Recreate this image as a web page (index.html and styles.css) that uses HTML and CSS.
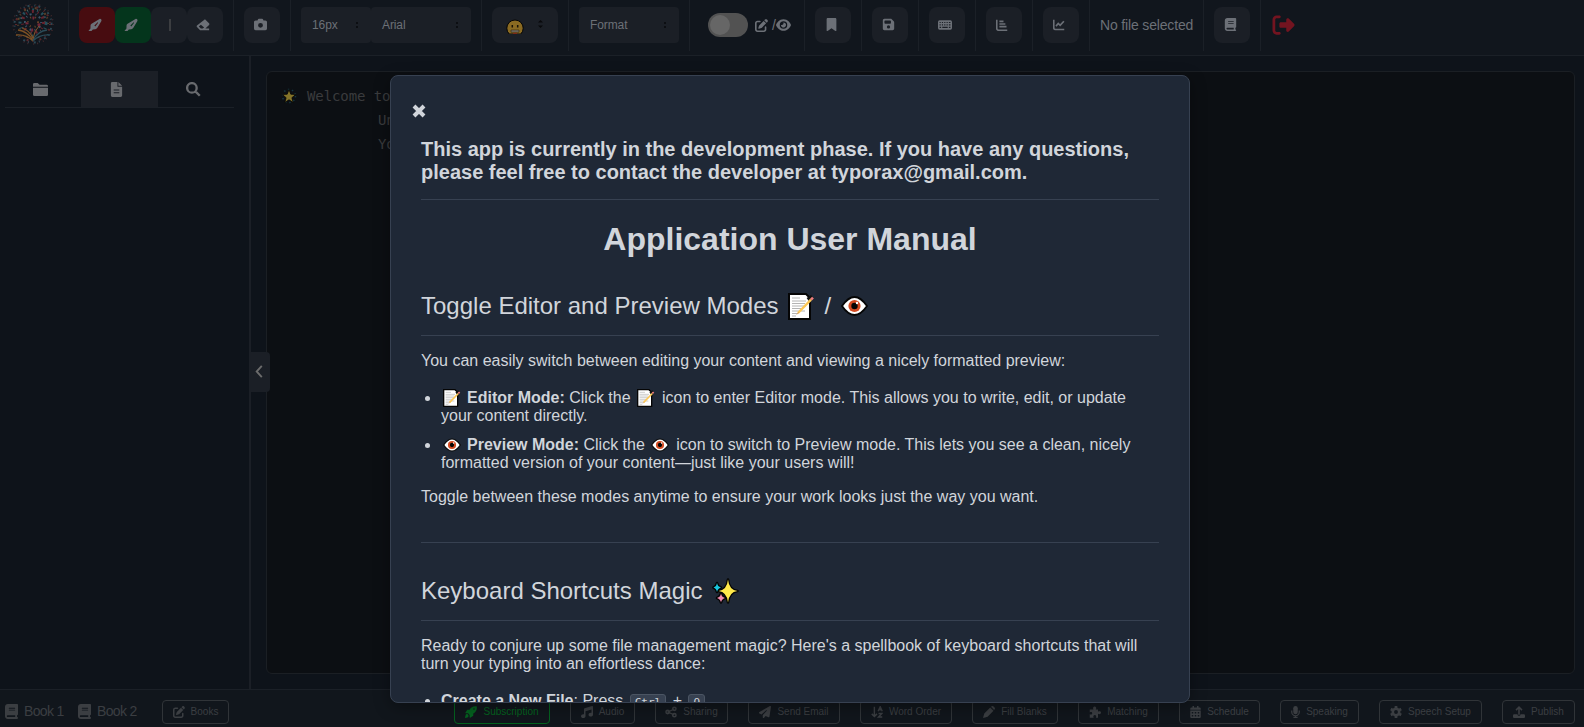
FILE: index.html
```html
<!DOCTYPE html>
<html lang="en">
<head>
<meta charset="utf-8">
<title>Application User Manual</title>
<link rel="stylesheet" href="styles.css">
</head>
<body>
<svg class="defs" aria-hidden="true">
  <symbol id="marker" viewBox="0 0 16 16"><path fill-rule="evenodd" d="M13.600.8c1.900.3 2.300 1.700 1.400 3.300l-4.500 7.400c-.6.9-1.200 1.300-2.100 1.400l-2.900.3-1.500 1.700H.5l2.300-2.900.1-3.300c0-.9.4-1.600 1.200-2.200zM7.300 8.700l1 .9 3.300-4.300-.6-.5z"/></symbol>
  <symbol id="eraser" viewBox="0 0 16 16"><path fill-rule="evenodd" d="M9.200 2.200c.6-.6 1.300-.6 1.900 0l3.800 3.800c.6.6.6 1.300 0 1.900L10.700 12H15v2H4.700L1.100 10.400c-.6-.6-.6-1.300 0-1.900zM5.600 7.700 3.200 9.700 5.600 12h2l1.700-1.200z"/></symbol>
  <symbol id="camera" viewBox="0 0 512 512"><path d="M149.100 64.800L138.700 96H64C28.700 96 0 124.700 0 160V416c0 35.300 28.700 64 64 64H448c35.300 0 64-28.700 64-64V160c0-35.300-28.700-64-64-64H373.300L362.900 64.800C356.400 45.200 338.100 32 317.400 32H194.600c-20.700 0-39 13.200-45.500 32.800zM256 192a96 96 0 1 1 0 192 96 96 0 1 1 0-192z"/></symbol>
  <symbol id="edit" viewBox="0 0 512 512"><path d="M471.600 21.700c-21.900-21.900-57.300-21.900-79.200 0L362.300 51.700l97.900 97.900 30.100-30.100c21.900-21.900 21.900-57.300 0-79.200zM172.400 241.700c-6.100 6.100-10.800 13.600-13.500 21.900l-29.600 88.800c-2.900 8.600-.6 18.100 5.800 24.600s15.900 8.700 24.600 5.800l88.800-29.600c8.200-2.700 15.700-7.400 21.900-13.500L437.700 172.300 339.700 74.300zM96 64C43 64 0 107 0 160V416c0 53 43 96 96 96H352c53 0 96-43 96-96V320c0-17.700-14.300-32-32-32s-32 14.300-32 32v96c0 17.700-14.300 32-32 32H96c-17.700 0-32-14.300-32-32V160c0-17.700 14.300-32 32-32h96c17.700 0 32-14.300 32-32s-14.300-32-32-32z"/></symbol>
  <symbol id="eye" viewBox="0 0 576 512"><path d="M288 32c-80.800 0-145.500 36.800-192.600 80.600C48.600 156 17.300 208 2.500 243.700c-3.300 7.900-3.300 16.700 0 24.600C17.300 304 48.600 356 95.400 399.400C142.500 443.200 207.200 480 288 480s145.500-36.800 192.600-80.600c46.800-43.500 78.100-95.400 93-131.100c3.300-7.900 3.300-16.700 0-24.600c-14.900-35.700-46.200-87.700-93-131.100C433.500 68.800 368.800 32 288 32zM144 256a144 144 0 1 1 288 0 144 144 0 1 1-288 0zm144-64c0 35.300-28.700 64-64 64c-7.100 0-13.900-1.200-20.300-3.300c-5.500-1.800-11.900 1.600-11.700 7.400c.3 6.900 1.300 13.800 3.200 20.700c13.700 51.200 66.400 81.600 117.600 67.900s81.600-66.400 67.900-117.600c-11.100-41.500-47.800-69.400-88.600-71.100c-5.800-.2-9.200 6.100-7.400 11.700c2.100 6.400 3.300 13.200 3.300 20.300z"/></symbol>
  <symbol id="bookmark" viewBox="0 0 384 512"><path d="M0 48V487.700C0 501.100 10.900 512 24.300 512c5 0 9.900-1.500 14-4.400L192 400 345.700 507.600c4.100 2.900 9 4.400 14 4.400c13.400 0 24.300-10.900 24.300-24.300V48c0-26.500-21.500-48-48-48H48C21.500 0 0 21.500 0 48z"/></symbol>
  <symbol id="save" viewBox="0 0 448 512"><path d="M64 32C28.700 32 0 60.700 0 96V416c0 35.300 28.700 64 64 64H384c35.300 0 64-28.700 64-64V173.300c0-17-6.700-33.300-18.700-45.300L352 50.700C340 38.700 323.700 32 306.700 32zm0 96c0-17.700 14.300-32 32-32H288c17.700 0 32 14.300 32 32v64c0 17.700-14.300 32-32 32H96c-17.700 0-32-14.300-32-32zM224 288a64 64 0 1 1 0 128 64 64 0 1 1 0-128z"/></symbol>
  <symbol id="keyboard" viewBox="0 0 18 16"><path fill-rule="evenodd" d="M2 2h14a2 2 0 0 1 2 2v8a2 2 0 0 1-2 2H2a2 2 0 0 1-2-2V4a2 2 0 0 1 2-2zM2 4v1.500h1.500V4zm3 0v1.500h1.500V4zm3 0v1.500h1.500V4zm3 0v1.500h1.500V4zm3 0v1.500h2V4zM2 7v1.500h1.500V7zm3 0v1.500h1.500V7zm3 0v1.500h1.500V7zm3 0v1.500h1.500V7zm3 0v1.500h2V7zM2 10.200v1.500h2v-1.500zm3.500 0v1.500h7v-1.500zm8.500 0v1.500h2v-1.500z"/></symbol>
  <symbol id="bars" viewBox="0 0 16 16"><path d="M1 1v11.500A2.500 2.500 0 0 0 3.500 15H15M4.500 3.200H10M4.500 6.700h8M4.500 10.200h9.500" fill="none" stroke="currentColor" stroke-width="2.200"/></symbol>
  <symbol id="line" viewBox="0 0 16 16"><path d="M1 1v11.500A2.500 2.500 0 0 0 3.500 14H15M4 9.500l3-3.500 2.500 2.500L14.500 3" fill="none" stroke="currentColor" stroke-width="2.200"/></symbol>
  <symbol id="book" viewBox="0 0 448 512"><path d="M96 0C43 0 0 43 0 96V416c0 53 43 96 96 96H416c17.700 0 32-14.300 32-32s-14.300-32-32-32V384c17.700 0 32-14.300 32-32V32c0-17.700-14.300-32-32-32zm0 384H352v64H96c-17.700 0-32-14.300-32-32s14.300-32 32-32zm32-240c0-8.800 7.200-16 16-16H336c8.800 0 16 7.200 16 16s-7.200 16-16 16H144c-8.800 0-16-7.200-16-16zm16 48H336c8.800 0 16 7.200 16 16s-7.200 16-16 16H144c-8.800 0-16-7.200-16-16s7.200-16 16-16z"/></symbol>
  <symbol id="exit" viewBox="0 0 512 512"><path d="M377.900 105.900L500.700 228.700c7.200 7.200 11.300 17.100 11.300 27.300s-4.100 20.100-11.300 27.300L377.900 406.100c-6.400 6.400-15 9.900-24 9.900c-18.700 0-33.900-15.200-33.900-33.900V320H192c-17.700 0-32-14.300-32-32v-64c0-17.700 14.300-32 32-32h128v-62.100c0-18.700 15.200-33.900 33.900-33.900c9 0 17.600 3.600 24 9.900zM160 96H96c-17.700 0-32 14.300-32 32v256c0 17.700 14.300 32 32 32h64c17.700 0 32 14.300 32 32s-14.300 32-32 32H96c-53 0-96-43-96-96V128C0 75 43 32 96 32h64c17.700 0 32 14.300 32 32s-14.300 32-32 32z"/></symbol>
  <symbol id="folder" viewBox="0 0 16 14"><path d="M0 4V1.500A1.500 1.500 0 0 1 1.500 0H5l2 2h7.500A1.500 1.500 0 0 1 16 3.500V4zM0 5h16v7.500a1.500 1.500 0 0 1-1.500 1.500h-13A1.500 1.500 0 0 1 0 12.500z"/></symbol>
  <symbol id="file" viewBox="0 0 12 16"><path fill-rule="evenodd" d="M1.500 0H7v5h5v9.500a1.500 1.500 0 0 1-1.500 1.500h-9A1.500 1.500 0 0 1 0 14.500v-13A1.500 1.500 0 0 1 1.500 0zM8 0l4 4H8zM3 8v1h6V8zm0 3v1h6v-1z"/></symbol>
  <symbol id="search" viewBox="0 0 16 16"><path d="M6.300 1.200a5.100 5.100 0 1 0 0 10.200 5.100 5.100 0 0 0 0-10.200zM10 10l4.700 4.700" fill="none" stroke="currentColor" stroke-width="2.500"/></symbol>
  <symbol id="rocket" viewBox="0 0 16 16"><path fill-rule="evenodd" d="M15.700.4c.7 4.400-.9 7.600-4.700 9.600v3l-4 2.500c-.5.2-.8 0-.8-.5V12L4 9.800H1c-.5 0-.7-.4-.5-.8L3 5h3C8 1.200 11.200-.3 15.700.4zM12 3a1 1 0 1 0 0 2 1 1 0 0 0 0-2zM3.800 11.200c1.500 1.500 1.200 3.300-.4 4-1 .4-2.200.6-3.300.7 0-1.200.2-2.300.6-3.400.6-1.500 2-2.200 3.100-1.300z"/></symbol>
  <symbol id="music" viewBox="0 0 512 512"><path d="M499.100 6.300c8.100 6 12.900 15.600 12.900 25.700V368c0 44.200-43 80-96 80s-96-35.800-96-80s43-80 96-80c11.200 0 22 1.600 32 4.600V147L192 223.800V432c0 44.200-43 80-96 80s-96-35.800-96-80s43-80 96-80c11.200 0 22 1.600 32 4.600V128c0-14.100 9.300-26.600 22.800-30.700l320-96c9.700-2.900 20.200-1.100 28.300 5z"/></symbol>
  <symbol id="share" viewBox="0 0 16 16"><path d="M12.500 4 4 8l8.500 4" fill="none" stroke="currentColor" stroke-width="1.800"/><g fill="none" stroke="currentColor" stroke-width="2"><circle cx="12.500" cy="3.800" r="2.200"/><circle cx="3.500" cy="8" r="2.200"/><circle cx="12.500" cy="12.200" r="2.200"/></g></symbol>
  <symbol id="plane" viewBox="0 0 512 512"><path d="M498.100 5.600c10.100 7 15.400 19.100 13.500 31.200l-64 416c-1.500 9.700-7.400 18.200-16 23s-18.900 5.400-28 1.600L284 427.700l-68.500 74.100c-8.900 9.700-22.900 12.900-35.200 8.100S160 493.200 160 480V396.400c0-4 1.500-7.800 4.200-10.700L331.800 202.800c5.800-6.300 5.600-16-.4-22s-15.700-6.400-22-.7L106 360.800 17.700 316.600C7.100 311.300.3 300.700 0 288.900s5.900-22.800 16.100-28.700l448-256c10.700-6.100 23.900-5.500 34 1.400z"/></symbol>
  <symbol id="sort" viewBox="0 0 16 16"><path d="M4.500 1v13M1 10.500 4.500 14 8 10.500M9.500 7l2.800-6L15 7M10.300 5h4M10 10h4.500L10 14.700h5" fill="none" stroke="currentColor" stroke-width="1.900"/></symbol>
  <symbol id="pencil" viewBox="0 0 16 16"><path d="m10.600 1 1-.6a2 2 0 0 1 2.500.2l1.300 1.300a2 2 0 0 1 .2 2.500l-.8 1zM9.600 2 1.700 9.900 0 16l6.100-1.700L14 6.400z"/></symbol>
  <symbol id="puzzle" viewBox="0 0 16 16"><path d="M6 4.500C4.800 2.700 5.600.5 7.500.5s2.900 2.200 1.600 4H12v3c1.800-1.200 4-.6 4 1.300s-2.200 2.700-4 1.500V15.500H9.300c1-2-.1-3.500-1.600-3.500s-2.500 1.500-1.500 3.500H1V11c2 1 3.300 0 3.300-1.300S3 7.500 1 8.500v-4z"/></symbol>
  <symbol id="calendar" viewBox="0 0 14 16"><path fill-rule="evenodd" d="M3 0h2v2h4V0h2v2h1.500A1.500 1.500 0 0 1 14 3.500V5H0V3.500A1.500 1.500 0 0 1 1.500 2H3zM0 6h14v8.500a1.500 1.500 0 0 1-1.500 1.500h-11A1.500 1.500 0 0 1 0 14.500zm2 2v2h2V8zm4 0v2h2V8zm4 0v2h2V8zm-8 4v2h2v-2zm4 0v2h2v-2zm4 0v2h2v-2z"/></symbol>
  <symbol id="mic" viewBox="0 0 12 16"><rect x="3" width="6" height="11" rx="3"/><path d="M1 6v2a5 5 0 0 0 10 0V6M6 13v2.200M3.200 15.200h5.600" fill="none" stroke="currentColor" stroke-width="1.600"/></symbol>
  <symbol id="gear" viewBox="0 0 16 16"><circle cx="8" cy="8" r="4.300" fill="none" stroke="currentColor" stroke-width="3.400"/><path d="M8 0v3M8 13v3M1.100 4l2.600 1.500M12.300 10.500l2.600 1.500M1.100 12l2.600-1.500M12.300 5.500 14.900 4" stroke="currentColor" stroke-width="3.600"/></symbol>
  <symbol id="upload" viewBox="0 0 16 16"><path d="M8 11.500V2M4 5.500 8 1.500l4 4" fill="none" stroke="currentColor" stroke-width="2"/><path d="M1.500 11H6c0 2.700 4 2.700 4 0h4.500A1.500 1.500 0 0 1 16 12.500v2a1.500 1.500 0 0 1-1.500 1.500h-13A1.500 1.500 0 0 1 0 14.500v-2A1.500 1.500 0 0 1 1.500 11z"/></symbol>
  <symbol id="memo" viewBox="0 0 27 27"><path d="M1 1h17l4 4v21H1z" fill="#fff" stroke="#050505" stroke-width="2"/><path d="M4 5h8M4 8h14M4 10.500h13M4 13h14M4 15.500h10M4 18h13M4 20.500h6M4 23h4" stroke="#b4b4b4"/><path d="m20 7 4.500-3" stroke="#111" stroke-width="5"/><path d="m10 20 13-13.300" stroke="#fcc755" stroke-width="2.400"/><path d="m23 6.700 2-2" stroke="#f08080" stroke-width="2.600"/><path d="m8 22 2.500-3 .8 1z" fill="#d9a066"/></symbol>
  <symbol id="eyeball" viewBox="0 0 27 20"><path d="M1 10Q13.500-8 26 10Q13.500 28 1 10z" fill="#fff" stroke="#050505" stroke-width="1.800"/><circle cx="13.500" cy="10" r="6.100" fill="#d34b22"/><circle cx="13.500" cy="10" r="3.200" fill="#050505"/><circle cx="16" cy="7" r="1.200" fill="#fff"/></symbol>
  <symbol id="sparkles" viewBox="0 0 27 27"><g stroke="#050505" stroke-width="2.600" stroke-linejoin="round" paint-order="stroke"><path d="M16 1.500q1 10.500 9.500 11.500-8.500 1-9.500 11.500-1-10.500-9.500-11.500Q15 12 16 1.500z" fill="#ffe94a"/><path d="M5 5q.5 3.500 4 4.500-3.500 1-4 4.500Q4.500 10.500 1.500 9.500 4.500 8.500 5 5z" fill="#18c5dd"/><path d="M9 15.500q.5 3.500 4 4.500-3.500 1-4 4.500-.5-3.500-4-4.500 3.500-1 4-4.500z" fill="#f28ab0"/></g></symbol>
</svg>

<div class="app">
  <header class="toolbar">
    <div class="group g-logo">
      <svg class="logo" viewBox="0 0 46 42">
        <circle cx="23" cy="20" r="18.500" stroke="#2c4652" stroke-width="2" stroke-dasharray="1 3 2 5"/>
        <circle cx="23" cy="20" r="20" stroke="#44292c" stroke-width="1.500" stroke-dasharray="1 5 1 3"/>
        <circle cx="23" cy="20" r="17" stroke="#57262a" stroke-width="2" stroke-dasharray="1 4 2 6"/>
        <circle cx="23" cy="19" r="15" stroke="#5a4029" stroke-width="2" stroke-dasharray="1 5 2 3"/>
        <circle cx="23" cy="19" r="13" stroke="#264f5c" stroke-width="3" stroke-dasharray="2 3 1 4"/>
        <circle cx="23" cy="18" r="10.500" stroke="#68232d" stroke-width="3" stroke-dasharray="2 4 1 5"/>
        <circle cx="23" cy="18" r="8" stroke="#3d566a" stroke-width="2" stroke-dasharray="1 3 2 4"/>
        <circle cx="23" cy="18" r="5" stroke="#6a4529" stroke-width="2" stroke-dasharray="1 4"/>
        <circle cx="23" cy="17" r="12" stroke="#666" stroke-width="1" stroke-dasharray="1 9"/>
        <circle cx="23" cy="20" r="6" stroke="#742637" stroke-width="3" stroke-dasharray="2 7"/>
        <path d="M23 37Q14 28 5 30l3-5q10 1 15 10 5-9 14-10l4 5q-9-2-18 7z" fill="#14161a"/>
        <path d="M8 26q9 1 15 10M6 31q10-1 17 6M12 24q7 2 11 10" stroke="#7d5125" stroke-width="1.300"/>
        <path d="M37 26q-9 1-14 10M40 31q-10-1-17 6" stroke="#2b4b58" stroke-width="1.300"/>
        <path d="M23 35q1-8 6-13" stroke="#80542b"/>
      </svg>
    </div>
    <div class="group g-pens">
      <button class="btn red"><svg class="i14"><use href="#marker"/></svg></button><button class="btn green"><svg class="i14"><use href="#marker"/></svg></button><button class="btn mid-bar"><span class="bar"></span></button><button class="btn"><svg class="i14"><use href="#eraser"/></svg></button>
    </div>
    <div class="group g-camera"><button class="btn wide"><svg class="i13"><use href="#camera"/></svg></button></div>
    <div class="group g-fonts">
      <div class="select w70"><span>16px</span><i class="dots"></i></div><div class="select w100"><span>Arial</span><i class="dots"></i></div>
    </div>
    <div class="group g-emoji">
      <div class="emoji-select">
        <svg class="grin" viewBox="0 0 18 15"><path d="M3.200 15a8.200 8.200 0 1 1 11.600 0z" fill="#8a6a22" stroke="#050505" stroke-width="1"/><path d="M6.300 6v2.400M11.700 6v2.400" stroke="#161005" stroke-width="1.500"/><path d="M5 11h8v2.200H5z" fill="#77736d" stroke="#3a2c10" stroke-width=".7"/><path d="M7 14.300h4" stroke="#8b2618"/></svg>
        <svg class="arrows" viewBox="0 0 5 10"><path d="M0 3.500 2.500 1 5 3.500zM0 6.500 2.500 9 5 6.500z"/></svg>
      </div>
    </div>
    <div class="group g-format"><div class="select w100"><span>Format</span><i class="dots"></i></div></div>
    <div class="group g-toggle">
      <span class="switch"><span class="knob"></span></span>
      <span class="modes"><svg class="i13"><use href="#edit"/></svg><span>/</span><svg class="eye-i"><use href="#eye"/></svg></span>
    </div>
    <div class="group g-one"><button class="btn"><svg class="i13"><use href="#bookmark"/></svg></button></div>
    <div class="group g-one"><button class="btn"><svg class="i13"><use href="#save"/></svg></button></div>
    <div class="group g-one"><button class="btn"><svg class="i14"><use href="#keyboard"/></svg></button></div>
    <div class="group g-one"><button class="btn"><svg class="i12"><use href="#bars"/></svg></button></div>
    <div class="group g-one"><button class="btn"><svg class="i12"><use href="#line"/></svg></button></div>
    <div class="group g-file"><span>No file selected</span></div>
    <div class="group g-one"><button class="btn"><svg class="i13"><use href="#book"/></svg></button></div>
    <div class="exit"><svg><use href="#exit"/></svg></div>
  </header>

  <main class="workspace">
    <aside class="sidebar">
      <nav class="tabs">
        <span class="tab"><svg class="i15"><use href="#folder"/></svg></span>
        <span class="tab active"><svg class="i15"><use href="#file"/></svg></span>
        <span class="tab"><svg class="i15"><use href="#search"/></svg></span>
      </nav>
    </aside>
    <section class="content">
      <div class="editor">
        <div class="row"><svg class="star" viewBox="0 0 16 16"><circle cx="8" cy="8" r="6.500" fill="none" stroke="#153641" stroke-width="1.500" stroke-dasharray="1.500 2.600"/><path d="m8 1.500 1.800 4.700 4.900.3-3.800 3.200 1.300 4.800L8 11.800l-4.200 2.700 1.300-4.800L1.300 6.500l4.900-.3z" fill="#84742a" stroke="#050505" stroke-width=".8"/></svg>Welcome to</div>
        <div class="row deep">Unleash</div>
        <div class="row deep">Your</div>
      </div>
      <div class="collapse"><svg viewBox="0 0 8 14"><path d="M7 1 1.500 7 7 13" fill="none" stroke="currentColor" stroke-width="2"/></svg></div>
    </section>
  </main>

  <footer class="footer">
    <div class="books">
      <span class="book"><svg><use href="#book"/></svg>Book 1</span>
      <span class="book"><svg><use href="#book"/></svg>Book 2</span>
    </div>
    <button class="act w67"><svg><use href="#edit"/></svg>Books</button>
    <div class="actions">
      <button class="act sub w96"><svg><use href="#rocket"/></svg>Subscription</button>
      <button class="act w65"><svg><use href="#music"/></svg>Audio</button>
      <button class="act w73"><svg><use href="#share"/></svg>Sharing</button>
      <button class="act w92"><svg><use href="#plane"/></svg>Send Email</button>
      <button class="act w92"><svg><use href="#sort"/></svg>Word Order</button>
      <button class="act w86"><svg><use href="#pencil"/></svg>Fill Blanks</button>
      <button class="act w81"><svg><use href="#puzzle"/></svg>Matching</button>
      <button class="act w81"><svg class="n"><use href="#calendar"/></svg>Schedule</button>
      <button class="act w79"><svg class="nn"><use href="#mic"/></svg>Speaking</button>
      <button class="act w103"><svg><use href="#gear"/></svg>Speech Setup</button>
      <button class="act w73"><svg><use href="#upload"/></svg>Publish</button>
    </div>
  </footer>
</div>

<div class="modal">
  <div class="close"><svg viewBox="0 0 14 14"><path d="m2 2 10 10M12 2 2 12" stroke="currentColor" stroke-width="4"/></svg></div>
  <h3 class="notice">This app is currently in the development phase. If you have any questions, please feel free to contact the developer at typorax@gmail.com.</h3>
  <hr class="rule r1">
  <h1 class="title">Application User Manual</h1>
  <h2 class="section">Toggle Editor and Preview Modes <svg class="e27"><use href="#memo"/></svg><span class="slash">/</span><svg class="eye27"><use href="#eyeball"/></svg></h2>
  <hr class="rule">
  <p class="intro">You can easily switch between editing your content and viewing a nicely formatted preview:</p>
  <ul class="list">
    <li><svg class="e18"><use href="#memo"/></svg><b>Editor Mode:</b> Click the <svg class="e18 mid"><use href="#memo"/></svg>icon to enter Editor mode. This allows you to write, edit, or update your content directly.</li>
    <li><svg class="e18"><use href="#eyeball"/></svg><b>Preview Mode:</b> Click the <svg class="e18 mid"><use href="#eyeball"/></svg>icon to switch to Preview mode. This lets you see a clean, nicely formatted version of your content—just like your users will!</li>
  </ul>
  <p class="after">Toggle between these modes anytime to ensure your work looks just the way you want.</p>
  <hr class="rule r3">
  <h2 class="section s2">Keyboard Shortcuts Magic <svg class="e27 magic"><use href="#sparkles"/></svg></h2>
  <hr class="rule">
  <p class="intro">Ready to conjure up some file management magic? Here's a spellbook of keyboard shortcuts that will turn your typing into an effortless dance:</p>
  <ul class="list keys">
    <li><b>Create a New File</b>: Press <kbd>Ctrl</kbd> + <kbd>Q</kbd></li>
  </ul>
</div>
</body>
</html>
```
FILE: styles.css
```css
* { box-sizing: border-box; }
body { margin: 0; background: #0e131a; font-family: "Liberation Sans", Arial, sans-serif; color: #6c7077; overflow: hidden; }
svg { fill: currentColor; display: block; flex: none; }
.defs { display: none; }
.app { height: 727px; display: flex; flex-direction: column; }

.toolbar { height: 56px; flex: none; display: flex; background: #11161d; border-bottom: 1px solid #1b2027; }
.group { height: 51px; padding: 7px 10px 8px; display: flex; border-right: 1px solid #1b2027; flex: none; }
.g-logo { width: 69px; padding: 4px 10px; }
.logo { width: 46px; height: 42px; fill: none; }
.g-pens { width: 165px; }
.g-camera { width: 57px; }
.g-fonts { width: 191px; }
.g-emoji { width: 87px; }
.g-format { width: 121px; }
.g-toggle { width: 115px; padding: 13px 12px 14px 18px; gap: 7px; }
.g-one { width: 57px; }
.g-file { width: 114px; align-items: center; font-size: 14px; letter-spacing: -.16px; padding-top: 6px; white-space: nowrap; }
.btn { width: 36px; height: 36px; flex: none; border: 0; border-radius: 8px; background: #1b1f26; color: #6c7077; padding: 0 4px 1px 0; display: flex; align-items: center; justify-content: center; }
.wide { padding-right: 3px; }
.mid-bar { padding: 0 0 0 2px; }
.red { background: #470c10; padding-right: 5px; }
.green { background: #04351c; padding-right: 5px; }
.bar { width: 2px; height: 12px; background: #3c3e41; }
.i12 { width: 12px; height: 12px; }
.i13 { width: 13px; height: 13px; }
.i14 { width: 14px; height: 14px; }
.i15 { width: 15px; height: 15px; }
.select { height: 36px; border-radius: 4px; background: #1b1f26; padding: 0 13px 0 11px; display: flex; align-items: center; justify-content: space-between; font-size: 12px; letter-spacing: -.1px; }
.w70 { width: 70px; }
.w100 { width: 100px; }
.dots { width: 2px; height: 6px; border-top: 2px solid #0c0e12; border-bottom: 2px solid #0c0e12; }
.emoji-select { width: 66px; height: 36px; border-radius: 8px; background: #1b1f26; display: flex; padding: 12px 15px 0 14px; justify-content: space-between; }
.grin { width: 18px; height: 15px; }
.arrows { width: 5px; height: 10px; color: #08090b; }
.switch { width: 40px; height: 24px; border-radius: 12px; background: #525252; padding: 2px; }
.knob { display: block; width: 20px; height: 20px; border-radius: 50%; background: #666; }
.modes { display: flex; align-items: center; font-size: 14px; }
.modes span { margin-left: 4px; }
.eye-i { width: 15px; height: 14px; }
.exit { padding: 14px 10px; color: #731420; }
.exit svg { width: 25px; height: 22px; }

.workspace { flex: 1; min-height: 0; display: flex; }
.sidebar { width: 251px; border-right: 2px solid #1b1f26; padding: 15px 15px 0 5px; flex: none; }
.tabs { height: 37px; display: flex; border-bottom: 1px solid #1b2027; }
.tab { flex: 1; display: flex; align-items: center; justify-content: center; padding: 0 5px 0 0; color: #686a6e; }
.active { background: #1b1f26; }
.content { flex: 1; padding: 15px 9px 16px 15px; position: relative; }
.editor { height: 603px; border: 1px solid #1b1f24; border-radius: 6px; background: #0c0f13; padding: 12px 14px; font: 14px/24px "DejaVu Sans Mono", monospace; letter-spacing: -.1px; color: #3a3b3d; }
.row { display: flex; align-items: center; white-space: nowrap; }
.star { width: 16px; height: 16px; margin-right: 10px; }
.deep { padding-left: 97px; }
.collapse { position: absolute; left: -1px; top: 296px; width: 20px; height: 40px; border-radius: 0 4px 4px 0; background: #1b1f26; display: flex; align-items: center; justify-content: center; padding: 0 2px 1px 0; color: #6c6c6c; }
.collapse svg { width: 8px; height: 13px; }

.footer { height: 38px; flex: none; border-top: 1px solid #1b2027; background: #11161c; display: flex; align-items: flex-start; padding: 10px 9px 0 5px; color: #3b3e42; }
.books { width: 157px; display: flex; gap: 15px; font-size: 14px; height: 24px; align-items: center; letter-spacing: -.65px; padding-bottom: 2px; }
.book { display: flex; gap: 6px; align-items: center; width: 58px; white-space: nowrap; }
.book svg { width: 13px; height: 15px; }
.actions { margin-left: auto; display: flex; gap: 20px; }
.act { height: 24px; border: 1px solid #303438; border-radius: 4px; background: transparent; color: #3b3e42; font: 10px "Liberation Sans", Arial, sans-serif; display: flex; align-items: center; justify-content: center; gap: 6px; padding: 0 0 1px; white-space: nowrap; }
.act svg { width: 12px; height: 12px; }
.act .n { width: 11px; }
.act .nn { width: 9px; }
.sub { border-color: #04621f; color: #04621f; }
.w65 { width: 65px; } .w67 { width: 67px; } .w73 { width: 73px; } .w79 { width: 79px; } .w81 { width: 81px; }
.w86 { width: 86px; } .w92 { width: 92px; } .w96 { width: 96px; } .w103 { width: 103px; }

.modal { position: absolute; left: 390px; top: 75px; width: 800px; height: 628px; background: #1f2836; border: 1px solid #374151; border-radius: 8px; box-shadow: 0 4px 16px rgba(0,0,0,.35); padding: 28px 30px 0; overflow: hidden; color: #d1d5db; font-size: 16px; line-height: 18px; }
.modal p, .modal h1, .modal h2, .modal h3, .modal ul { margin: 0; }
.close { margin-left: -9px; height: 14px; }
.close svg { width: 14px; height: 14px; }
.modal .notice { font-size: 20px; line-height: 23px; margin-top: 20px; }
.rule { border: 0; height: 1px; background: #374151; margin: 0; }
.r1 { margin-top: 15px; }
.modal .title { font-size: 32px; line-height: 36px; text-align: center; margin-top: 21px; }
.modal .section { font-size: 24px; line-height: 28px; font-weight: 400; margin-top: 35px; margin-bottom: 15px; display: flex; align-items: center; }
.e27 { width: 27px; height: 27px; margin-left: 9px; }
.magic { margin-left: 10px; }
.slash { margin: 0 10px 0 10px; }
.eye27 { width: 27px; height: 20px; }
.intro { padding-top: 16px; }
.modal .list { padding-left: 20px; margin-top: 19px; }
.list li { margin-bottom: 11px; }
.list svg { display: inline-block; vertical-align: -4px; }
.e18 { width: 18px; height: 18px; margin: 0 6px 0 2px; }
.list .mid { margin-right: 7px; }
.modal .after { margin-top: 16px; }
.r3 { margin-top: 36px; }
.modal .s2 { margin-top: 34px; }
kbd { display: inline-block; font: 11px/14px "DejaVu Sans Mono", monospace; border: 1px solid #4b5563; border-radius: 3px; background: #374151; padding: 1px 4px; margin: 0 2px; }
```
